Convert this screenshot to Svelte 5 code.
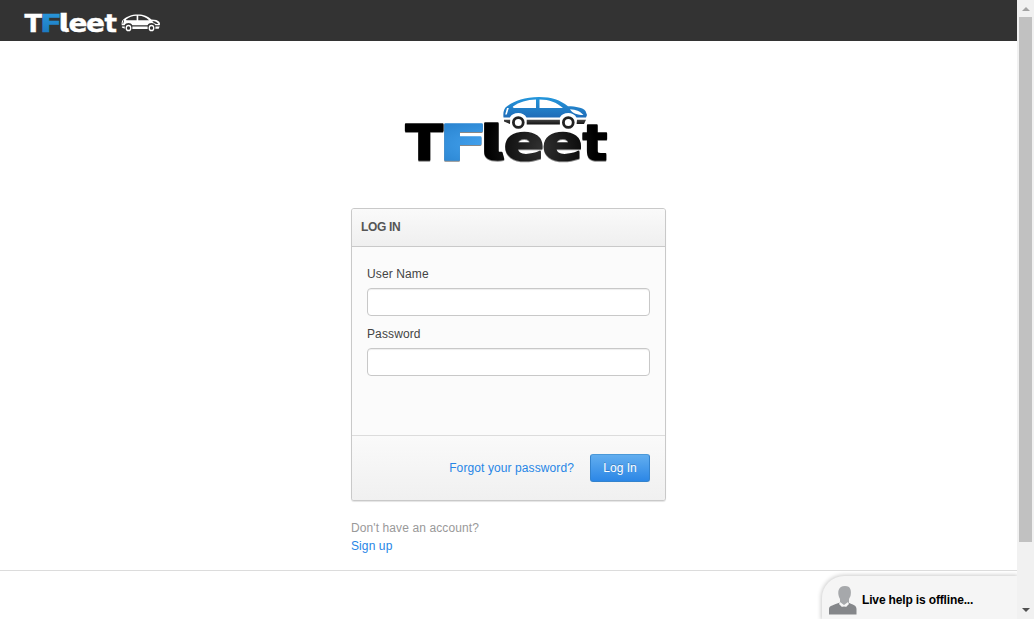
<script>
  let username = $state('');
  let password = $state('');
</script>

{#snippet car()}
  <path class="body" d="M1.500 20.500c-.5-4 0-9 3.500-11.200C12 4 22 0 37 0c13 0 21 3 29 9.300 8 0 15 1.500 17.500 4.700l1.500 4-1 2.500h-9.500c-1.500-3-4.500-4.500-8.200-4.500-4 0-7 1.500-8.500 4.500H24.500c-1.500-3-4.500-4.500-8.200-4.500-4 0-7 1.500-8.500 4.500Z" />
  <path class="glass" d="M11 9.500C17 5 25 2.600 34 2.400V11H13.500c-2 0-3.200-.8-2.500-1.500ZM37.500 2.400C48 2.600 54 5 61 11H37.500ZM5 11h1.800l-2 6.500H3.200ZM68 12.200c6 .2 10 2 13.500 5.800-6 0-11-1.500-13.500-5.800Z" />
  <path class="sill" d="M2 22.800h6.200L8 27l-6-2.600ZM24.700 22.800h33.200v4.700H24.700ZM75 22.800h9L82 27h-7.400Z" />
  <circle class="wheel" cx="16.300" cy="25.500" r="4.900" />
  <circle class="wheel" cx="66.300" cy="25.500" r="4.900" />
{/snippet}

<div class="viewport">
  <div class="page">
    <header>
      <svg class="brand" width="140" height="24" viewBox="0 0 140 24" aria-label="TFleet">
        <defs>
          <linearGradient id="small-blue" x1="0" y1="0" x2="0" y2="1">
            <stop offset="0" stop-color="#2d9ee0" /><stop offset="1" stop-color="#1872bb" />
          </linearGradient>
        </defs>
        <text class="word small" y="22"><tspan x="0.5" textLength="17.5" lengthAdjust="spacingAndGlyphs">T</tspan><tspan class="blue" x="15.800" textLength="22.5" lengthAdjust="spacingAndGlyphs">F</tspan><tspan class="tail" x="35.500" textLength="9.5" lengthAdjust="spacingAndGlyphs">l</tspan><tspan x="44.5" textLength="19" lengthAdjust="spacingAndGlyphs">e</tspan><tspan x="62" textLength="19" lengthAdjust="spacingAndGlyphs">e</tspan><tspan x="80.5" textLength="12.5" lengthAdjust="spacingAndGlyphs">t</tspan></text>
        <g class="small-car" transform="translate(97 4.500) scale(.46 .53)">{@render car()}</g>
      </svg>
    </header>

    <main>
      <svg class="logo" width="210" height="72" viewBox="402 94 210 72" aria-label="TFleet">
        <defs>
          <radialGradient id="big-blue" cx=".5" cy=".55" r=".6">
            <stop offset="0" stop-color="#4aa9f5" /><stop offset="1" stop-color="#1f78c4" />
          </radialGradient>
          <linearGradient id="car-blue" x1="0" y1="0" x2="0" y2="1">
            <stop offset="0" stop-color="#2497dc" /><stop offset="1" stop-color="#1f6cb8" />
          </linearGradient>
          <linearGradient id="sill-ink" x1="0" y1="0" x2="0" y2="1">
            <stop offset="0" stop-color="#444" /><stop offset="1" stop-color="#111" />
          </linearGradient>
          <radialGradient id="ink" gradientUnits="userSpaceOnUse" cx="541" cy="147" r="55">
            <stop offset="0" stop-color="#303030" /><stop offset="1" stop-color="#000" />
          </radialGradient>
        </defs>
        <text class="word large" y="160"><tspan x="405.500" textLength="37.5" lengthAdjust="spacingAndGlyphs">T</tspan><tspan class="blue" x="438.8" textLength="49" lengthAdjust="spacingAndGlyphs">F</tspan><tspan class="tail" x="482" textLength="21.5" lengthAdjust="spacingAndGlyphs">l</tspan><tspan x="503.500" textLength="41" lengthAdjust="spacingAndGlyphs">e</tspan><tspan x="542" textLength="41" lengthAdjust="spacingAndGlyphs">e</tspan><tspan x="582.5" textLength="25" lengthAdjust="spacingAndGlyphs">t</tspan></text>
        <g class="big-car" transform="translate(502 97)">{@render car()}</g>
      </svg>

      <form class="card" onsubmit={(e) => e.preventDefault()}>
        <h1>LOG IN</h1>
        <div class="fields">
          <label for="user">User Name</label>
          <input id="user" type="text" bind:value={username} />
          <label for="pass">Password</label>
          <input id="pass" type="password" bind:value={password} />
        </div>
        <div class="actions">
          <a class="forgot" href="#forgot">Forgot your password?</a>
          <button type="submit">Log In</button>
        </div>
      </form>

      <div class="signup">
        <span>Don't have an account?</span>
        <a href="#signup">Sign up</a>
      </div>
    </main>

    <footer></footer>

    <aside class="help">
      <svg width="28" height="30" viewBox="0 0 28 30">
        <path fill="#a6a8ab" d="M10 12C8.500 7 9 1 16 1c6 0 6.500 5 5.500 10l-1.500 3v5l-4 2-5-3v-4Z" />
        <path fill="#85878a" d="M0 29.500V24c0-3.500 5-4 11-6.500l4 4.500 4-4.500c5 2.500 8.500 2.500 8.500 6.500v5.500Z" />
        <path fill="#f5f5f5" d="m11 17 4 3 4-3 1 2-3 3-2-1-2 1-3-3Z" />
      </svg>
      <strong>Live help is offline...</strong>
    </aside>
  </div>

  <div class="scrollbar">
    <svg width="17" height="17"><path d="M5 11h8L9 7Z" fill="#a3a3a3" /></svg>
    <div class="thumb"></div>
    <svg width="17" height="17"><path d="M5 6h8l-4 4Z" fill="#505050" /></svg>
  </div>
</div>

<style>
  :global(body) {
    margin: 0;
    overflow: hidden;
    background: #fff;
  }
  .viewport {
    display: flex;
    height: 619px;
    font: 12px/18px "Liberation Sans", Arial, sans-serif;
    color: #444;
  }
  .page {
    position: relative;
    flex: 1;
    overflow: hidden;
  }
  header {
    box-sizing: border-box;
    height: 41px;
    padding: 10px 0 0 24px;
    background: #333;
  }
  svg {
    display: block;
    overflow: visible;
  }
  .word {
    font-family: "DejaVu Sans", sans-serif;
    font-weight: bold;
  }
  .small {
    font-size: 25.5px;
    fill: #fff;
    stroke: #fff;
    stroke-width: 0.4px;
  }
  .small .blue {
    fill: url(#small-blue);
    stroke: url(#small-blue);
  }
  .large {
    font-size: 50.5px;
    fill: url(#ink);
    stroke: url(#ink);
    stroke-width: 1.6px;
    stroke-linejoin: round;
    filter: drop-shadow(0.5px 1px 0.7px #888);
  }
  .large .blue {
    fill: url(#big-blue);
    stroke: url(#big-blue);
  }
  .tail {
    font-family: Inter, sans-serif;
    font-weight: 900;
    font-feature-settings: "cv05", "ss02";
  }
  .big-car .body {
    fill: url(#car-blue);
  }
  .glass {
    fill: #fff;
  }
  .sill {
    fill: url(#sill-ink);
  }
  .wheel {
    fill: #fff;
    stroke: #222;
    stroke-width: 2.8px;
  }
  .small-car .body,
  .small-car .sill {
    fill: #fff;
  }
  .small-car .glass {
    fill: #333;
  }
  .small-car .wheel {
    fill: #333;
    stroke: #fff;
  }
  main {
    box-sizing: border-box;
    width: 315px;
    height: 529px;
    margin: 0 auto;
    padding-top: 53px;
  }
  .logo {
    margin-left: 51px;
  }
  .card {
    box-sizing: border-box;
    height: 293px;
    margin-top: 42px;
    border: 1px solid #c9c9c9;
    border-radius: 3px;
    background: #fbfbfb;
    box-shadow: 0 1px 1px #e4e4e4;
    overflow: hidden;
  }
  h1 {
    height: 37px;
    margin: 0;
    padding-left: 9px;
    border-bottom: 1px solid #c9c9c9;
    background: linear-gradient(#fafafa, #efefef);
    font-size: 12px;
    line-height: 36px;
    letter-spacing: -0.35px;
    color: #555;
  }
  .fields {
    box-sizing: border-box;
    height: 188px;
    padding: 18px 15px 0;
  }
  label {
    display: block;
    height: 18px;
    margin-bottom: 5px;
    letter-spacing: 0.12px;
  }
  input {
    display: block;
    box-sizing: border-box;
    width: 283px;
    height: 28px;
    margin: 0 0 9px;
    padding: 4px 6px;
    border: 1px solid #c8c8c8;
    border-radius: 4px;
    background: #fff;
    box-shadow: inset 0 1px 1px #eee;
    font: inherit;
  }
  .actions {
    box-sizing: border-box;
    display: flex;
    align-items: center;
    justify-content: flex-end;
    gap: 16px;
    height: 65px;
    padding: 0 15px;
    border-top: 1px solid #dcdcdc;
    background: linear-gradient(#fafafa, #f0f0f0);
  }
  a {
    color: #2786e6;
    text-decoration: none;
  }
  .forgot,
  .signup {
    letter-spacing: 0.1px;
  }
  button {
    width: 60px;
    height: 28px;
    padding: 0;
    border: 1px solid #3483cd;
    border-top-color: #4b99d8;
    border-radius: 3px;
    background: linear-gradient(#62aeef, #2c87e6);
    color: #fff;
    font: inherit;
    text-shadow: 0 -1px 0 rgba(0, 0, 0, 0.2);
  }
  .signup {
    display: flex;
    flex-direction: column;
    padding-top: 18px;
    color: #999;
  }
  footer {
    height: 48px;
    border-top: 1px solid #dcdcdc;
  }
  .help {
    position: absolute;
    right: 0;
    bottom: 0;
    box-sizing: border-box;
    display: flex;
    gap: 5px;
    width: 195px;
    height: 43px;
    padding: 9px 0 0 7px;
    border-radius: 22px 0 0 0;
    background: #f5f5f5;
    box-shadow: 0 0 4px 1px #ccc;
    color: #000;
  }
  .help strong {
    line-height: 30px;
    letter-spacing: -0.15px;
  }
  .scrollbar {
    display: flex;
    flex-direction: column;
    width: 17px;
    background: #f1f1f1;
  }
  .thumb {
    width: 13px;
    height: 525px;
    margin: 0 2px auto;
    background: #c1c1c1;
  }
</style>
